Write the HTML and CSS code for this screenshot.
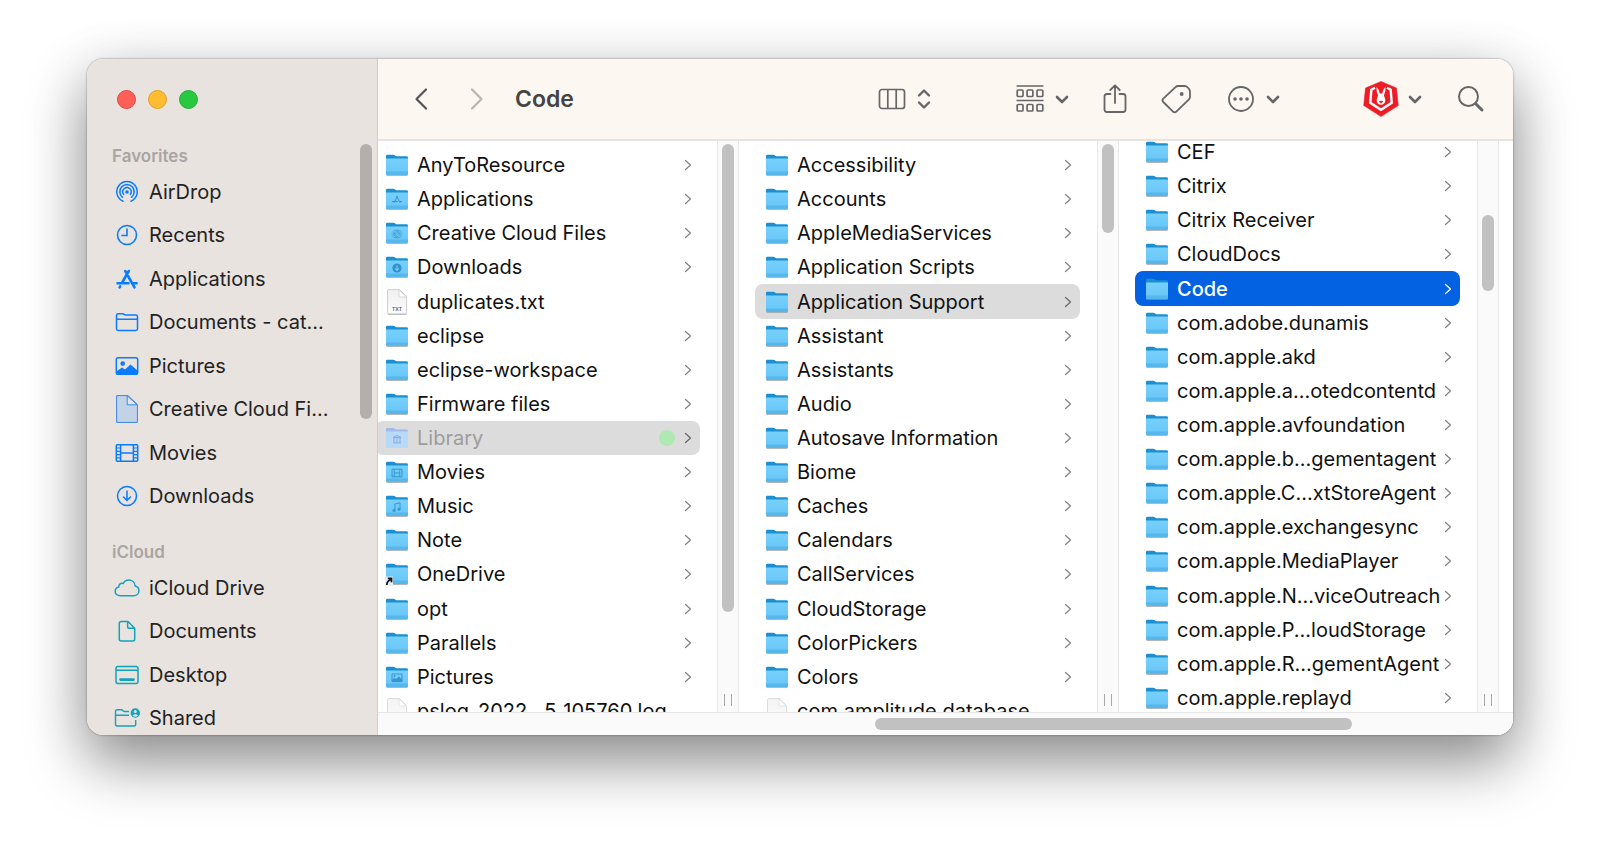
FILE: index.html
```html
<!DOCTYPE html>
<html lang="en">
<head>
<meta charset="utf-8">
<title>Code</title>
<link rel="stylesheet" href="styles.css">
</head>
<body>
<svg class="defs" aria-hidden="true">
  <defs>
    <linearGradient id="front" x1="0" y1="0" x2="0" y2="1"><stop offset="0" stop-color="#78d0fb"/><stop offset="1" stop-color="#66c5f7"/></linearGradient>
    <linearGradient id="paper" x1="0" y1="0" x2="0" y2="1"><stop offset="0" stop-color="#efefef"/><stop offset="1" stop-color="#fcfcfc"/></linearGradient>
    <symbol id="folder" viewBox="0 0 24 24">
      <path d="M1 20V3Q1 1.700 2.300 1.700h6q.9 0 1.600.6l.8.700q.4.300 1 .3H21.600q1.400 0 1.400 1.400V20z" fill="#1a8fd2"/>
      <path d="M1 5.500h22v15.500q0 1-1 1H2q-1 0-1-1z" fill="url(#front)"/>
      <path d="M1 18.500h22V21q0 1-1 1H2q-1 0-1-1z" fill="#58b7ea"/>
      <path d="M1.500 22.500h21" stroke="#8f9ba3" stroke-width="1" opacity=".7"/>
    </symbol>
    <symbol id="doc" viewBox="0 0 24 26">
      <path d="M2.500 2Q2.500.5 4 .5H14.500L21.500 7.500V23.500Q21.500 25 20 25H4Q2.500 25 2.500 23.500z" fill="url(#paper)" stroke="#d0d0d0"/>
      <path d="M14 .8V6.500Q14 8 15.500 8H21.300z" fill="#fff" stroke="#cfcfcf" stroke-width=".8"/>
      <path d="M2.500 25.300H21.500" stroke="#a9a9a9" stroke-width=".8"/>
    </symbol>
    <symbol id="go" viewBox="0 0 8 12"><path d="M1.500 1.500 6.500 6 1.500 10.500" fill="none" stroke="currentColor" stroke-width="1.300" stroke-linecap="round" stroke-linejoin="round"/></symbol>
    <symbol id="down" viewBox="0 0 14 9"><path d="M2 2 7 7 12 2" fill="none" stroke="currentColor" stroke-width="2.600" stroke-linecap="round" stroke-linejoin="round"/></symbol>
  </defs>
</svg>
<div class="window">
  <aside class="sidebar">
    <div class="lights">
      <button class="light close" aria-label="Close"></button>
      <button class="light minimize" aria-label="Minimize"></button>
      <button class="light zoom" aria-label="Zoom"></button>
    </div>
    <nav class="places">
      <h2>Favorites</h2>
      <ul class="favorites">
        <li><a href="#"><svg viewBox="0 0 26 28"><g fill="none" stroke="currentColor" stroke-width="1.500" stroke-linecap="round"><path d="M9 23.200A10.200 10.200 0 1 1 17 23.200"/><path d="M8.500 19.300A7.200 7.200 0 1 1 17.500 19.300"/><path d="M9.700 16.400A4.200 4.200 0 1 1 16.300 16.400"/></g><circle cx="13" cy="14" r="1.800" fill="currentColor"/></svg>AirDrop</a></li>
        <li><a href="#"><svg viewBox="0 0 26 28"><g fill="none" stroke="currentColor" stroke-width="1.600" stroke-linecap="round"><circle cx="13" cy="14" r="9.500"/><path d="M13 8v6.500H8"/></g></svg>Recents</a></li>
        <li><a href="#"><svg viewBox="0 0 26 28"><g fill="none" stroke="currentColor" stroke-width="2.600" stroke-linecap="round"><path d="M14.800 6 8.500 17M11.200 6l1.300 2.200M14 11l6.500 11.300M3.500 18.200h11M18.800 18.200h3.800M6.200 21.300l-.6 1"/></g></svg>Applications</a></li>
        <li><a href="#"><svg viewBox="0 0 26 28"><g fill="none" stroke="currentColor" stroke-width="1.500" stroke-linejoin="round"><path d="M2.500 20.800V7.500Q2.500 5.800 4.200 5.800H8.500Q9.300 5.800 10 6.400T11.500 7H21.800Q23.500 7 23.500 8.700V20.800Q23.500 22.500 21.800 22.500H4.200Q2.500 22.500 2.500 20.800zM2.500 11.300h21"/></g></svg>Documents - cat...</a></li>
        <li><a href="#"><svg viewBox="0 0 26 28"><rect x="2.300" y="5.800" width="21.400" height="16.400" rx="1.800" fill="none" stroke="currentColor" stroke-width="1.500"/><circle cx="8.700" cy="11.600" r="2.300" fill="currentColor"/><path d="M2.500 19.500 8 15.500l3 2 5.500-5 7 6V22h-21z" fill="currentColor"/></svg>Pictures</a></li>
        <li><a href="#"><svg viewBox="0 0 26 28"><path d="M2.600.6H14L23.400 9.500V27.400H2.600z" fill="#c2d3e8" stroke="#3a86e8" stroke-width="1"/><path d="M13.200.8V9.800H23.200z" fill="#e4e6ea" stroke="#3a86e8" stroke-width="1"/></svg>Creative Cloud Fi...</a></li>
        <li><a href="#"><svg viewBox="0 0 26 28"><g fill="none" stroke="currentColor" stroke-width="1.500"><rect x="2.300" y="5.800" width="21.400" height="16.400" rx="1"/><path d="M6.600 6v16M19.400 6v16M6.600 14h12.800"/><path d="M2.300 9h4.300M2.300 12.300h4.300M2.300 15.600h4.300M2.300 18.900h4.300M19.400 9h4.300M19.400 12.300h4.300M19.400 15.600h4.300M19.400 18.900h4.300" stroke-width="1.200"/></g></svg>Movies</a></li>
        <li><a href="#"><svg viewBox="0 0 26 28"><g fill="none" stroke="currentColor" stroke-width="1.500" stroke-linecap="round" stroke-linejoin="round"><circle cx="13" cy="14" r="9.500"/><path d="M13 9v9.500M9.500 15l3.500 3.600 3.500-3.600"/></g></svg>Downloads</a></li>
      </ul>
      <h2>iCloud</h2>
      <ul class="cloud">
        <li><a href="#"><svg viewBox="0 0 26 28"><path d="M6.300 21.800C3.300 21.800 1.200 19.900 1.200 17.400 1.200 15.200 2.700 13.500 4.700 13 4.600 10.300 7 8.800 9.200 9.500 10.300 7.300 12.300 6 14.800 6c3.500 0 6.100 2.500 6.400 6 2.100.5 3.700 2.300 3.700 4.700 0 2.900-2.200 5.100-5.100 5.100z" fill="none" stroke="currentColor" stroke-width="1.500"/></svg>iCloud Drive</a></li>
        <li><a href="#"><svg viewBox="0 0 26 28"><path d="M14 4.500H7.300Q5.300 4.500 5.300 6.500v15.500Q5.300 24 7.300 24H18.700Q20.700 24 20.700 22V11.200zM13.600 4.500v5Q13.600 11.300 15.400 11.300h5.300" fill="none" stroke="currentColor" stroke-width="1.500" stroke-linejoin="round"/></svg>Documents</a></li>
        <li><a href="#"><svg viewBox="0 0 26 28"><g fill="none" stroke="currentColor" stroke-width="1.500"><rect x="2" y="5.500" width="22" height="17" rx="2"/><path d="M2 9.300h22"/></g><path d="M6.500 18.600h13" stroke="currentColor" stroke-width="2.600" stroke-linecap="round"/></svg>Desktop</a></li>
        <li><a href="#"><svg viewBox="0 0 26 28"><path d="M15 7.500h-4.500Q9.800 7.500 9 6.700T7.300 5.800H3.200Q1.500 5.800 1.500 7.500V20.500Q1.500 22 3.200 22H20Q21.700 22 21.700 20.500V16M1.500 11.200H15" fill="none" stroke="currentColor" stroke-width="1.400"/><circle cx="21.300" cy="9" r="4.700" fill="currentColor"/><circle cx="21.300" cy="7.600" r="1.500" fill="#e8e3df"/><path d="M18.500 11.600q2.800-2.800 5.600 0-2.800 2.400-5.600 0z" fill="#e8e3df"/></svg>Shared</a></li>
      </ul>
      <div class="thumb side-thumb"></div>
    </nav>
  </aside>
  <main class="main">
    <header class="toolbar">
      <div class="nav">
        <button aria-label="Back"><svg width="14" height="24" viewBox="0 0 14 24"><path d="M12 2.500 2.500 12 12 21.500" fill="none" stroke="currentColor" stroke-width="2.200" stroke-linecap="round" stroke-linejoin="round"/></svg></button>
        <button class="off" aria-label="Forward"><svg width="14" height="24" viewBox="0 0 14 24"><path d="M2 2.500 11.500 12 2 21.500" fill="none" stroke="currentColor" stroke-width="2.200" stroke-linecap="round" stroke-linejoin="round"/></svg></button>
      </div>
      <h1>Code</h1>
      <div class="tools">
        <button aria-label="View"><svg width="28" height="22" viewBox="0 0 28 22"><g fill="none" stroke="currentColor" stroke-width="1.700"><rect x="1.500" y="1.500" width="25" height="19" rx="2.500"/><path d="M9.800 1.500v19M18.200 1.500v19"/></g></svg><svg width="14" height="22" viewBox="0 0 14 22"><path d="M2 7.500 7 2.500 12 7.500M2 14.500 7 19.500 12 14.500" fill="none" stroke="currentColor" stroke-width="2.400" stroke-linecap="round" stroke-linejoin="round"/></svg></button>
        <button class="group" aria-label="Group"><svg width="28" height="30" viewBox="0 0 28 30"><g fill="none" stroke="currentColor" stroke-width="1.700"><path d="M.5 2h27M.5 16.500h27"/><rect x="1.200" y="6" width="5.800" height="6.500" rx="1"/><rect x="11.100" y="6" width="5.800" height="6.500" rx="1"/><rect x="21" y="6" width="5.800" height="6.500" rx="1"/><rect x="1.200" y="20.500" width="5.800" height="6.500" rx="1"/><rect x="11.100" y="20.500" width="5.800" height="6.500" rx="1"/><rect x="21" y="20.500" width="5.800" height="6.500" rx="1"/></g></svg><svg width="14" height="9"><use href="#down"/></svg></button>
        <button class="share" aria-label="Share"><svg width="24" height="32" viewBox="0 0 24 32"><path d="M7.500 11H4Q1.500 11 1.500 13.500V26.500Q1.500 29 4 29H20Q22.500 29 22.500 26.500V13.500Q22.500 11 20 11H16.500M12 20V2.500M7.300 7 12 2.300 16.700 7" fill="none" stroke="currentColor" stroke-width="1.800" stroke-linecap="round" stroke-linejoin="round"/></svg></button>
        <button class="tag" aria-label="Tags"><svg width="30" height="30" viewBox="0 0 30 30"><path d="M17.300 2H23.500Q25.500 2 26.800 3.500L28 4.800Q29 6 29 8V13Q29 14.300 28 15.300L15.300 27.600Q13.600 29.200 12 27.600L2.300 18Q.7 16.300 2.300 14.700L14.500 3.200Q15.700 2 17.300 2z" fill="none" stroke="currentColor" stroke-width="1.800"/><circle cx="20.700" cy="10" r="1.900" fill="currentColor"/></svg></button>
        <button class="more" aria-label="Actions"><svg width="28" height="28" viewBox="0 0 28 28"><circle cx="14" cy="14" r="12" fill="none" stroke="currentColor" stroke-width="1.800"/><g fill="currentColor"><circle cx="8" cy="14" r="1.800"/><circle cx="14" cy="14" r="1.800"/><circle cx="20" cy="14" r="1.800"/></g></svg><svg width="14" height="9"><use href="#down"/></svg></button>
        <button class="app" aria-label="Extension"><svg width="36" height="36" viewBox="0 0 36 36"><path d="M18 .4 33.500 7 35.300 24.500 18 35.600.7 24.500 2.500 7z" fill="#ee1c25" stroke="#ee1c25" stroke-width=".5" stroke-linejoin="round"/><path d="M12 6.800 8.300 8.800 7.300 21.800 18 28.800 28.700 21.800 27.700 8.800 24 6.800" fill="none" stroke="#fff" stroke-width="2.400"/><path d="M13.600 6Q15.800 8 16.700 12.500H19.300Q20.200 8 22.400 6 23 10.500 20.900 14.500 22.600 18 22.200 20.500 21.500 23.500 18 23.700 14.500 23.500 13.800 20.500 13.400 18 15.100 14.500 13 10.500 13.600 6z" fill="#fff"/><path d="M16 20.300q2-1 4 0-.3 1.700-2 1.900-1.700-.2-2-1.900z" fill="#ee1c25"/></svg><svg width="14" height="9"><use href="#down"/></svg></button>
        <button class="search" aria-label="Search"><svg width="28" height="28" viewBox="0 0 28 28"><circle cx="11.500" cy="11.500" r="9.500" fill="none" stroke="currentColor" stroke-width="2"/><path d="M18.700 18.700 25 25" stroke="currentColor" stroke-width="3" stroke-linecap="round"/></svg></button>
      </div>
    </header>
    <div class="columns">
      <section class="column">
        <ul class="rows">
          <li><a href="#"><svg class="icon"><use href="#folder"/></svg><span>AnyToResource</span><svg class="go"><use href="#go"/></svg></a></li>
          <li><a href="#"><svg class="icon" viewBox="0 0 24 24"><use href="#folder"/><path d="M12.600 9 9 15.800M11.400 9l3.700 6.800M7 14.500h6M15 14.500h2" class="mark"/></svg><span>Applications</span><svg class="go"><use href="#go"/></svg></a></li>
          <li><a href="#"><svg class="icon" viewBox="0 0 24 24"><use href="#folder"/><ellipse cx="12" cy="13" rx="5.500" ry="4.500" fill="#3f9fd6" opacity=".7"/><path d="M10 15.500A2.500 2.500 0 1 1 11.500 11.500L14.500 14.500M14 10.500A2.500 2.500 0 1 1 14 15.500L10.500 13" fill="none" stroke="#70c8f5" stroke-width=".9"/></svg><span>Creative Cloud Files</span><svg class="go"><use href="#go"/></svg></a></li>
          <li><a href="#"><svg class="icon" viewBox="0 0 24 24"><use href="#folder"/><circle cx="12" cy="13" r="4.600" fill="#3093cb"/><path d="M12 10.500v4.500M10 13.300l2 2 2-2" fill="none" stroke="#70c8f5" stroke-width="1.200"/></svg><span>Downloads</span><svg class="go"><use href="#go"/></svg></a></li>
          <li><a href="#"><svg class="icon" viewBox="0 0 24 26"><use href="#doc"/><text x="12" y="22" text-anchor="middle" class="ext">TXT</text></svg><span>duplicates.txt</span></a></li>
          <li><a href="#"><svg class="icon"><use href="#folder"/></svg><span>eclipse</span><svg class="go"><use href="#go"/></svg></a></li>
          <li><a href="#"><svg class="icon"><use href="#folder"/></svg><span>eclipse-workspace</span><svg class="go"><use href="#go"/></svg></a></li>
          <li><a href="#"><svg class="icon"><use href="#folder"/></svg><span>Firmware files</span><svg class="go"><use href="#go"/></svg></a></li>
          <li><a href="#" class="open hidden-item"><svg class="icon" viewBox="0 0 24 24"><path d="M1 21V3.300Q1 2 2.300 2H8.500L11 3.600H21.600Q23 3.600 23 5V21Q23 22 22 22H2Q1 22 1 21z" fill="#b9d9f8"/><path d="M1 5.500V3.300Q1 2 2.300 2H8.500L11 3.600H21.600Q23 3.600 23 5.500z" fill="#a3bbe8"/><path d="M8 11.500 12 9.500 16 11.500zM9 12v4M12 12v4M15 12v4M8 16.800h8" fill="none" stroke="#86ace0"/></svg><span>Library</span><i class="dot"></i><svg class="go"><use href="#go"/></svg></a></li>
          <li><a href="#"><svg class="icon" viewBox="0 0 24 24"><use href="#folder"/><path d="M7 9.200h10v7.600H7zM9.200 9v8M14.800 9v8M9.200 13h5.600" class="mark"/></svg><span>Movies</span><svg class="go"><use href="#go"/></svg></a></li>
          <li><a href="#"><svg class="icon" viewBox="0 0 24 24"><use href="#folder"/><path d="M10 16.500V10l5-1.300v6.500" class="mark"/><circle cx="9" cy="16.500" r="1.500" fill="#3596cf"/><circle cx="14" cy="15.200" r="1.500" fill="#3596cf"/></svg><span>Music</span><svg class="go"><use href="#go"/></svg></a></li>
          <li><a href="#"><svg class="icon"><use href="#folder"/></svg><span>Note</span><svg class="go"><use href="#go"/></svg></a></li>
          <li><a href="#"><svg class="icon" viewBox="0 0 24 24"><use href="#folder"/><path d="M0 14.500H8V24H0z" fill="#e4edf3"/><path d="M1.800 23Q1.800 19.500 5.500 17.500M2.800 16.300H6.500V20.300" fill="none" stroke="#111" stroke-width="1.700"/></svg><span>OneDrive</span><svg class="go"><use href="#go"/></svg></a></li>
          <li><a href="#"><svg class="icon"><use href="#folder"/></svg><span>opt</span><svg class="go"><use href="#go"/></svg></a></li>
          <li><a href="#"><svg class="icon"><use href="#folder"/></svg><span>Parallels</span><svg class="go"><use href="#go"/></svg></a></li>
          <li><a href="#"><svg class="icon" viewBox="0 0 24 24"><use href="#folder"/><path d="M7 9h10v7.600H7z" class="mark"/><path d="M7 16.500v-2l2.500-1.500 1.500 1 3-2.500 3 3v2z" fill="#3596cf"/><circle cx="9.500" cy="11" r=".9" fill="#3596cf"/></svg><span>Pictures</span><svg class="go"><use href="#go"/></svg></a></li>
          <li><a href="#" class="faint"><svg class="icon" viewBox="0 0 24 26"><use href="#doc"/></svg><span>pslog_2022...5_105760.log</span></a></li>
        </ul>
        <div class="track"><div class="thumb tall"></div><div class="grip"></div></div>
      </section>
      <section class="column">
        <ul class="rows">
          <li><a href="#"><svg class="icon"><use href="#folder"/></svg><span>Accessibility</span><svg class="go"><use href="#go"/></svg></a></li>
          <li><a href="#"><svg class="icon"><use href="#folder"/></svg><span>Accounts</span><svg class="go"><use href="#go"/></svg></a></li>
          <li><a href="#"><svg class="icon"><use href="#folder"/></svg><span>AppleMediaServices</span><svg class="go"><use href="#go"/></svg></a></li>
          <li><a href="#"><svg class="icon"><use href="#folder"/></svg><span>Application Scripts</span><svg class="go"><use href="#go"/></svg></a></li>
          <li><a href="#" class="open"><svg class="icon"><use href="#folder"/></svg><span>Application Support</span><svg class="go"><use href="#go"/></svg></a></li>
          <li><a href="#"><svg class="icon"><use href="#folder"/></svg><span>Assistant</span><svg class="go"><use href="#go"/></svg></a></li>
          <li><a href="#"><svg class="icon"><use href="#folder"/></svg><span>Assistants</span><svg class="go"><use href="#go"/></svg></a></li>
          <li><a href="#"><svg class="icon"><use href="#folder"/></svg><span>Audio</span><svg class="go"><use href="#go"/></svg></a></li>
          <li><a href="#"><svg class="icon"><use href="#folder"/></svg><span>Autosave Information</span><svg class="go"><use href="#go"/></svg></a></li>
          <li><a href="#"><svg class="icon"><use href="#folder"/></svg><span>Biome</span><svg class="go"><use href="#go"/></svg></a></li>
          <li><a href="#"><svg class="icon"><use href="#folder"/></svg><span>Caches</span><svg class="go"><use href="#go"/></svg></a></li>
          <li><a href="#"><svg class="icon"><use href="#folder"/></svg><span>Calendars</span><svg class="go"><use href="#go"/></svg></a></li>
          <li><a href="#"><svg class="icon"><use href="#folder"/></svg><span>CallServices</span><svg class="go"><use href="#go"/></svg></a></li>
          <li><a href="#"><svg class="icon"><use href="#folder"/></svg><span>CloudStorage</span><svg class="go"><use href="#go"/></svg></a></li>
          <li><a href="#"><svg class="icon"><use href="#folder"/></svg><span>ColorPickers</span><svg class="go"><use href="#go"/></svg></a></li>
          <li><a href="#"><svg class="icon"><use href="#folder"/></svg><span>Colors</span><svg class="go"><use href="#go"/></svg></a></li>
          <li><a href="#" class="faint"><svg class="icon" viewBox="0 0 24 26"><use href="#doc"/></svg><span>com.amplitude.database</span></a></li>
        </ul>
        <div class="track"><div class="thumb short"></div><div class="grip"></div></div>
      </section>
      <section class="column">
        <ul class="rows scrolled">
          <li><a href="#"><svg class="icon"><use href="#folder"/></svg><span>CEF</span><svg class="go"><use href="#go"/></svg></a></li>
          <li><a href="#"><svg class="icon"><use href="#folder"/></svg><span>Citrix</span><svg class="go"><use href="#go"/></svg></a></li>
          <li><a href="#"><svg class="icon"><use href="#folder"/></svg><span>Citrix Receiver</span><svg class="go"><use href="#go"/></svg></a></li>
          <li><a href="#"><svg class="icon"><use href="#folder"/></svg><span>CloudDocs</span><svg class="go"><use href="#go"/></svg></a></li>
          <li><a href="#" class="selected" aria-current="true"><svg class="icon"><use href="#folder"/></svg><span>Code</span><svg class="go"><use href="#go"/></svg></a></li>
          <li><a href="#"><svg class="icon"><use href="#folder"/></svg><span>com.adobe.dunamis</span><svg class="go"><use href="#go"/></svg></a></li>
          <li><a href="#"><svg class="icon"><use href="#folder"/></svg><span>com.apple.akd</span><svg class="go"><use href="#go"/></svg></a></li>
          <li><a href="#"><svg class="icon"><use href="#folder"/></svg><span>com.apple.a...otedcontentd</span><svg class="go"><use href="#go"/></svg></a></li>
          <li><a href="#"><svg class="icon"><use href="#folder"/></svg><span>com.apple.avfoundation</span><svg class="go"><use href="#go"/></svg></a></li>
          <li><a href="#"><svg class="icon"><use href="#folder"/></svg><span>com.apple.b...gementagent</span><svg class="go"><use href="#go"/></svg></a></li>
          <li><a href="#"><svg class="icon"><use href="#folder"/></svg><span>com.apple.C...xtStoreAgent</span><svg class="go"><use href="#go"/></svg></a></li>
          <li><a href="#"><svg class="icon"><use href="#folder"/></svg><span>com.apple.exchangesync</span><svg class="go"><use href="#go"/></svg></a></li>
          <li><a href="#"><svg class="icon"><use href="#folder"/></svg><span>com.apple.MediaPlayer</span><svg class="go"><use href="#go"/></svg></a></li>
          <li><a href="#"><svg class="icon"><use href="#folder"/></svg><span>com.apple.N...viceOutreach</span><svg class="go"><use href="#go"/></svg></a></li>
          <li><a href="#"><svg class="icon"><use href="#folder"/></svg><span>com.apple.P...loudStorage</span><svg class="go"><use href="#go"/></svg></a></li>
          <li><a href="#"><svg class="icon"><use href="#folder"/></svg><span>com.apple.R...gementAgent</span><svg class="go"><use href="#go"/></svg></a></li>
          <li><a href="#"><svg class="icon"><use href="#folder"/></svg><span>com.apple.replayd</span><svg class="go"><use href="#go"/></svg></a></li>
        </ul>
        <div class="track"><div class="thumb middle"></div><div class="grip"></div></div>
      </section>
    </div>
    <div class="hscroll"><div class="hthumb"></div></div>
  </main>
</div>
</body>
</html>
```
FILE: styles.css
```css
* { box-sizing: border-box; }
body {
  margin: 0;
  height: 100vh;
  padding: 59px 87px 115px;
  display: flex;
  overflow: hidden;
  background: #fff;
  font: 20px/24px Inter, "Liberation Sans", sans-serif;
  color: #111;
}
.defs { position: absolute; width: 0; height: 0; }
ul { margin: 0; padding: 0; list-style: none; }
a { color: inherit; text-decoration: none; }
button { border: 0; padding: 0; background: none; color: inherit; font: inherit; }
svg { flex: none; display: block; }

.window {
  flex: 1;
  min-width: 0;
  display: flex;
  overflow: hidden;
  border-radius: 16px;
  box-shadow: 0 0 2px rgba(0, 0, 0, .5), 0 28px 60px rgba(0, 0, 0, .4), 0 10px 60px rgba(0, 0, 0, .12);
}

.sidebar {
  flex: none;
  width: 291px;
  display: flex;
  flex-direction: column;
  overflow: hidden;
  background: #e8e3df;
  border-right: 1px solid #d3cdc9;
}
.lights { flex: none; height: 81px; padding-left: 30px; display: flex; align-items: center; gap: 12px; }
.light { width: 19px; height: 19px; border-radius: 50%; }
.close { background: #ff5f57; border: 1px solid #e2443e; }
.minimize { background: #febc2e; border: 1px solid #e0a028; }
.zoom { background: #28c840; border: 1px solid #22b136; }
.places { position: relative; flex: 1; min-height: 0; }
.places h2 {
  margin: 0;
  padding: 4px 0 0 25px;
  height: 30px;
  font-size: 17px;
  line-height: 24px;
  font-weight: 600;
  color: #aaa5a2;
}
.places ul { display: grid; grid-auto-rows: 1fr; }
.places a { height: 100%; padding-left: 27px; display: flex; align-items: center; gap: 9px; white-space: nowrap; color: #222; }
.places svg { width: 26px; height: 28px; color: #0a7aff; }
.favorites { height: 348px; margin-bottom: 18px; }
.cloud { height: 174px; }
.places .cloud svg { color: #12a2bd; }

.thumb { width: 12px; border-radius: 6px; background: #c1c1c1; }
.side-thumb { position: absolute; top: 4px; right: 5px; height: 275px; background: #b5afac; }

.main { flex: 1; min-width: 0; display: flex; flex-direction: column; background: #fff; }
.toolbar {
  flex: none;
  height: 82px;
  padding: 0 28px 0 36px;
  display: flex;
  align-items: center;
  background: #fcf7f1;
  border-bottom: 2px solid #e8e3df;
  color: #666;
}
.nav { display: flex; gap: 42px; color: #555; }
.nav .off { color: #b9b5b1; }
h1 { margin: 0 0 0 31px; font-size: 23px; line-height: 28px; font-weight: 600; color: #444; }
.tools { margin-left: auto; display: flex; align-items: center; }
.tools button { display: flex; align-items: center; gap: 11px; }
.tools .group { margin-left: 85px; }
.tools .share { margin-left: 34px; }
.tools .tag { margin-left: 34px; }
.tools .more { margin-left: 36px; }
.tools .app { margin-left: 83px; gap: 9px; }
.tools .search { margin-left: 35px; }

.columns { flex: 1; min-height: 0; display: flex; justify-content: flex-end; overflow: hidden; padding-right: 14px; }
.column { flex: none; width: 380px; display: flex; overflow: hidden; }
.rows {
  flex: 1;
  min-width: 0;
  height: 580px;
  margin: 7px 17px 0 16px;
  display: grid;
  grid-auto-rows: 1fr;
}
.rows.scrolled { margin-top: -6px; }
.rows a { height: 100%; padding: 0 8px 0 10px; display: flex; align-items: center; border-radius: 8px; white-space: nowrap; }
.rows span { flex: 1; min-width: 0; margin-left: 8px; }
.icon { width: 24px; height: 26px; }
.go { width: 8px; height: 12px; color: #858585; }
.mark { fill: none; stroke: #3596cf; stroke-width: 1; }
.ext { font: 600 5px Inter, sans-serif; fill: #555; }
.open { background: #dcdcdc; }
.open .go { color: #6b6b6b; }
.hidden-item { color: #9c9c9c; }
.selected { background: #0362e1; color: #fff; font-weight: 500; }
.selected .go { color: #fff; }
.faint .icon { opacity: .7; }
.dot { width: 16px; height: 16px; margin-right: 9px; border-radius: 50%; background: #afe8b2; }

.track {
  flex: none;
  width: 22px;
  display: flex;
  flex-direction: column;
  align-items: center;
  background: #fafafa;
  border: solid #e8e8e8;
  border-width: 0 1px;
}
.tall { margin-top: 3px; height: 468px; }
.short { margin-top: 3px; height: 89px; }
.middle { margin-top: 74px; height: 76px; }
.grip { width: 8px; height: 12px; margin: auto 0 6px; border: solid #a9a9a9; border-width: 0 1px; }

.hscroll { flex: none; height: 23px; padding: 5px 257px 0 0; display: flex; justify-content: flex-end; background: #fafafa; border-top: 1px solid #e6e6e6; }
.hscroll { padding-right: 161px; }
.hthumb { width: 49%; height: 12px; border-radius: 6px; background: #c1c1c1; }
```
